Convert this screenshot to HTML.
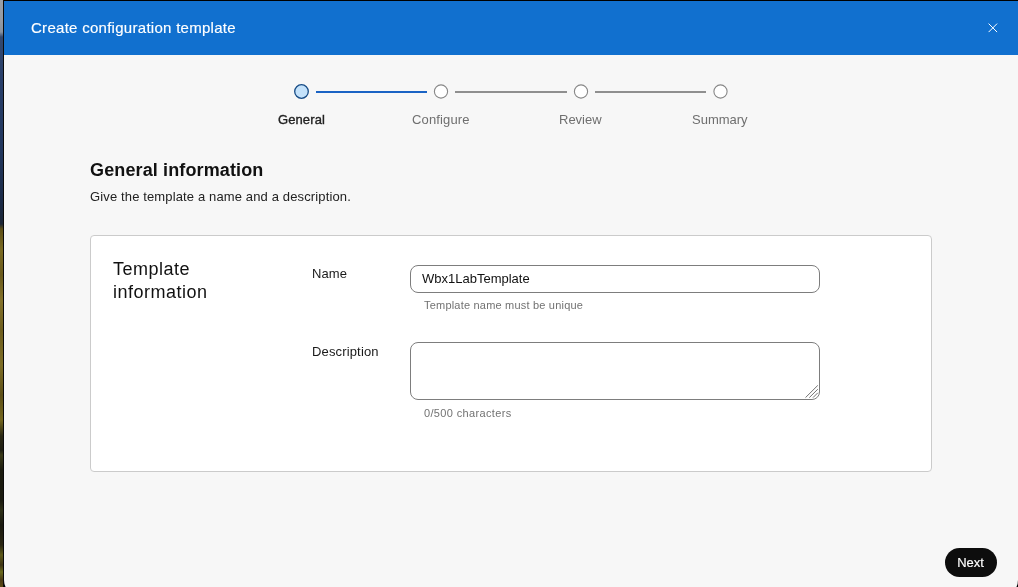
<!DOCTYPE html>
<html><head><meta charset="utf-8">
<style>
*{box-sizing:border-box;margin:0;padding:0}
html,body{width:1018px;height:587px;overflow:hidden;background:#000}
body{font-family:"Liberation Sans",sans-serif;position:relative;-webkit-font-smoothing:antialiased}
.abs,#title{will-change:transform}
#bg{position:absolute;left:0;top:0;width:3px;height:587px;
 background:linear-gradient(to bottom,#9aa0a8 0px,#959ba4 20px,#8792a0 32px,#34496f 37px,#283f6a 80px,#22375e 150px,#1b2b48 200px,#1c2636 224px,#5e5018 229px,#7a6a22 250px,#6a5a1c 275px,#84722a 300px,#6e5e1e 330px,#7e6e26 365px,#5e5018 395px,#74661e 420px,#2a2814 436px,#1e1e12 450px,#3a3a18 455px,#1c1c10 470px,#1a1a10 500px,#2e3018 510px,#1a1a10 525px,#2a2612 545px,#5e5a1a 555px,#3e3414 565px,#6a6a1e 572px,#4a3a14 580px,#5a4a14 587px)}
#edge{position:absolute;left:3px;top:0;width:1px;height:587px;background:#0a0a0a}
#modal{position:absolute;left:4px;top:1px;width:1014px;height:595px;background:#f7f7f7;border-radius:0 0 16px 16px;overflow:hidden}
#hdr{position:absolute;left:0;top:0;width:1014px;height:54px;background:#1170cf}
#title{position:absolute;left:27px;top:18px;font-size:15px;letter-spacing:0.28px;color:#fff;white-space:nowrap;-webkit-text-stroke:0.15px #fff}
#close{position:absolute;left:984px;top:21px}
.abs{position:absolute;white-space:nowrap}
textarea{font-family:"Liberation Sans",sans-serif;outline:none}
</style></head><body>
<div id="bg"></div><div id="edge"></div>
<div id="modal">
 <div id="hdr">
  <div id="title">Create configuration template</div>
  <svg id="close" width="12" height="12" viewBox="0 0 12 12"><path d="M0.6 1.6L9.1 10.1M9.1 1.6L0.6 10.1" stroke="#fff" stroke-width="1" fill="none"/></svg>
 </div>
</div>
<svg class="abs" style="left:0;top:0" width="1018" height="587">
 <circle cx="301.5" cy="91.5" r="6.8" fill="#c4e2fb" stroke="#174c86" stroke-width="1.3"/>
 <line x1="316" y1="92" x2="427" y2="92" stroke="#1a63c4" stroke-width="2"/>
 <circle cx="441" cy="91.5" r="6.6" fill="#fff" stroke="#878787" stroke-width="1.1"/>
 <line x1="455" y1="92" x2="567" y2="92" stroke="#8f8f8f" stroke-width="2"/>
 <circle cx="581" cy="91.5" r="6.6" fill="#fff" stroke="#878787" stroke-width="1.1"/>
 <line x1="595" y1="92" x2="706" y2="92" stroke="#8f8f8f" stroke-width="2"/>
 <circle cx="720.5" cy="91.5" r="6.6" fill="#fff" stroke="#878787" stroke-width="1.1"/>
</svg>
<div class="abs" style="left:278px;top:112px;font-size:13px;letter-spacing:0.1px;-webkit-text-stroke:0.35px #222;color:#222">General</div>
<div class="abs" style="left:412px;top:112px;font-size:13px;letter-spacing:0.15px;color:#6f6f6f">Configure</div>
<div class="abs" style="left:559px;top:112px;font-size:13px;color:#6f6f6f">Review</div>
<div class="abs" style="left:692px;top:112px;font-size:13px;color:#6f6f6f">Summary</div>

<div class="abs" style="left:90px;top:160px;font-size:18px;font-weight:bold;letter-spacing:0.13px;color:#111">General information</div>
<div class="abs" style="left:90px;top:189px;font-size:13px;letter-spacing:0.135px;color:#222">Give the template a name and a description.</div>

<div class="abs" style="left:90px;top:235px;width:842px;height:237px;background:#fff;border:1px solid #cbcbcb;border-radius:4px"></div>
<div class="abs" style="left:113px;top:258px;font-size:18px;line-height:23px;letter-spacing:0.5px;color:#111;white-space:normal">Template<br>information</div>
<div class="abs" style="left:312px;top:266px;font-size:13px;letter-spacing:0.1px;color:#1a1a1a">Name</div>
<div class="abs" style="left:410px;top:265px;width:410px;height:28px;background:#fff;border:1px solid #7d7d7d;border-radius:8px"></div>
<div class="abs" style="left:421.8px;top:271px;font-size:13px;color:#111">Wbx1LabTemplate</div>
<div class="abs" style="left:424px;top:299px;font-size:11px;letter-spacing:0.2px;color:#727272">Template name must be unique</div>
<div class="abs" style="left:312px;top:344px;font-size:13px;letter-spacing:0.15px;color:#1a1a1a">Description</div>
<textarea class="abs" style="left:410px;top:342px;width:410px;height:58px;background:#fff;border:1px solid #7d7d7d;border-radius:8px;resize:none"></textarea>
<svg class="abs" style="left:800px;top:380px" width="22" height="22" viewBox="800 380 22 22"><path d="M805.5 397.6L817.8 385.4M809.3 397.6L817.8 389.2M813 397.6L817.8 392.8" stroke="#727272" stroke-width="1" fill="none"/></svg>
<div class="abs" style="left:424px;top:407px;font-size:11px;letter-spacing:0.35px;color:#727272">0/500 characters</div>

<div class="abs" style="left:945px;top:548px;width:52px;height:29px;background:#0d0d0d;border-radius:15px;color:#fff;font-size:13px;text-align:center;line-height:29px;padding-right:1px;-webkit-text-stroke:0.15px #fff">Next</div>
</body></html>
